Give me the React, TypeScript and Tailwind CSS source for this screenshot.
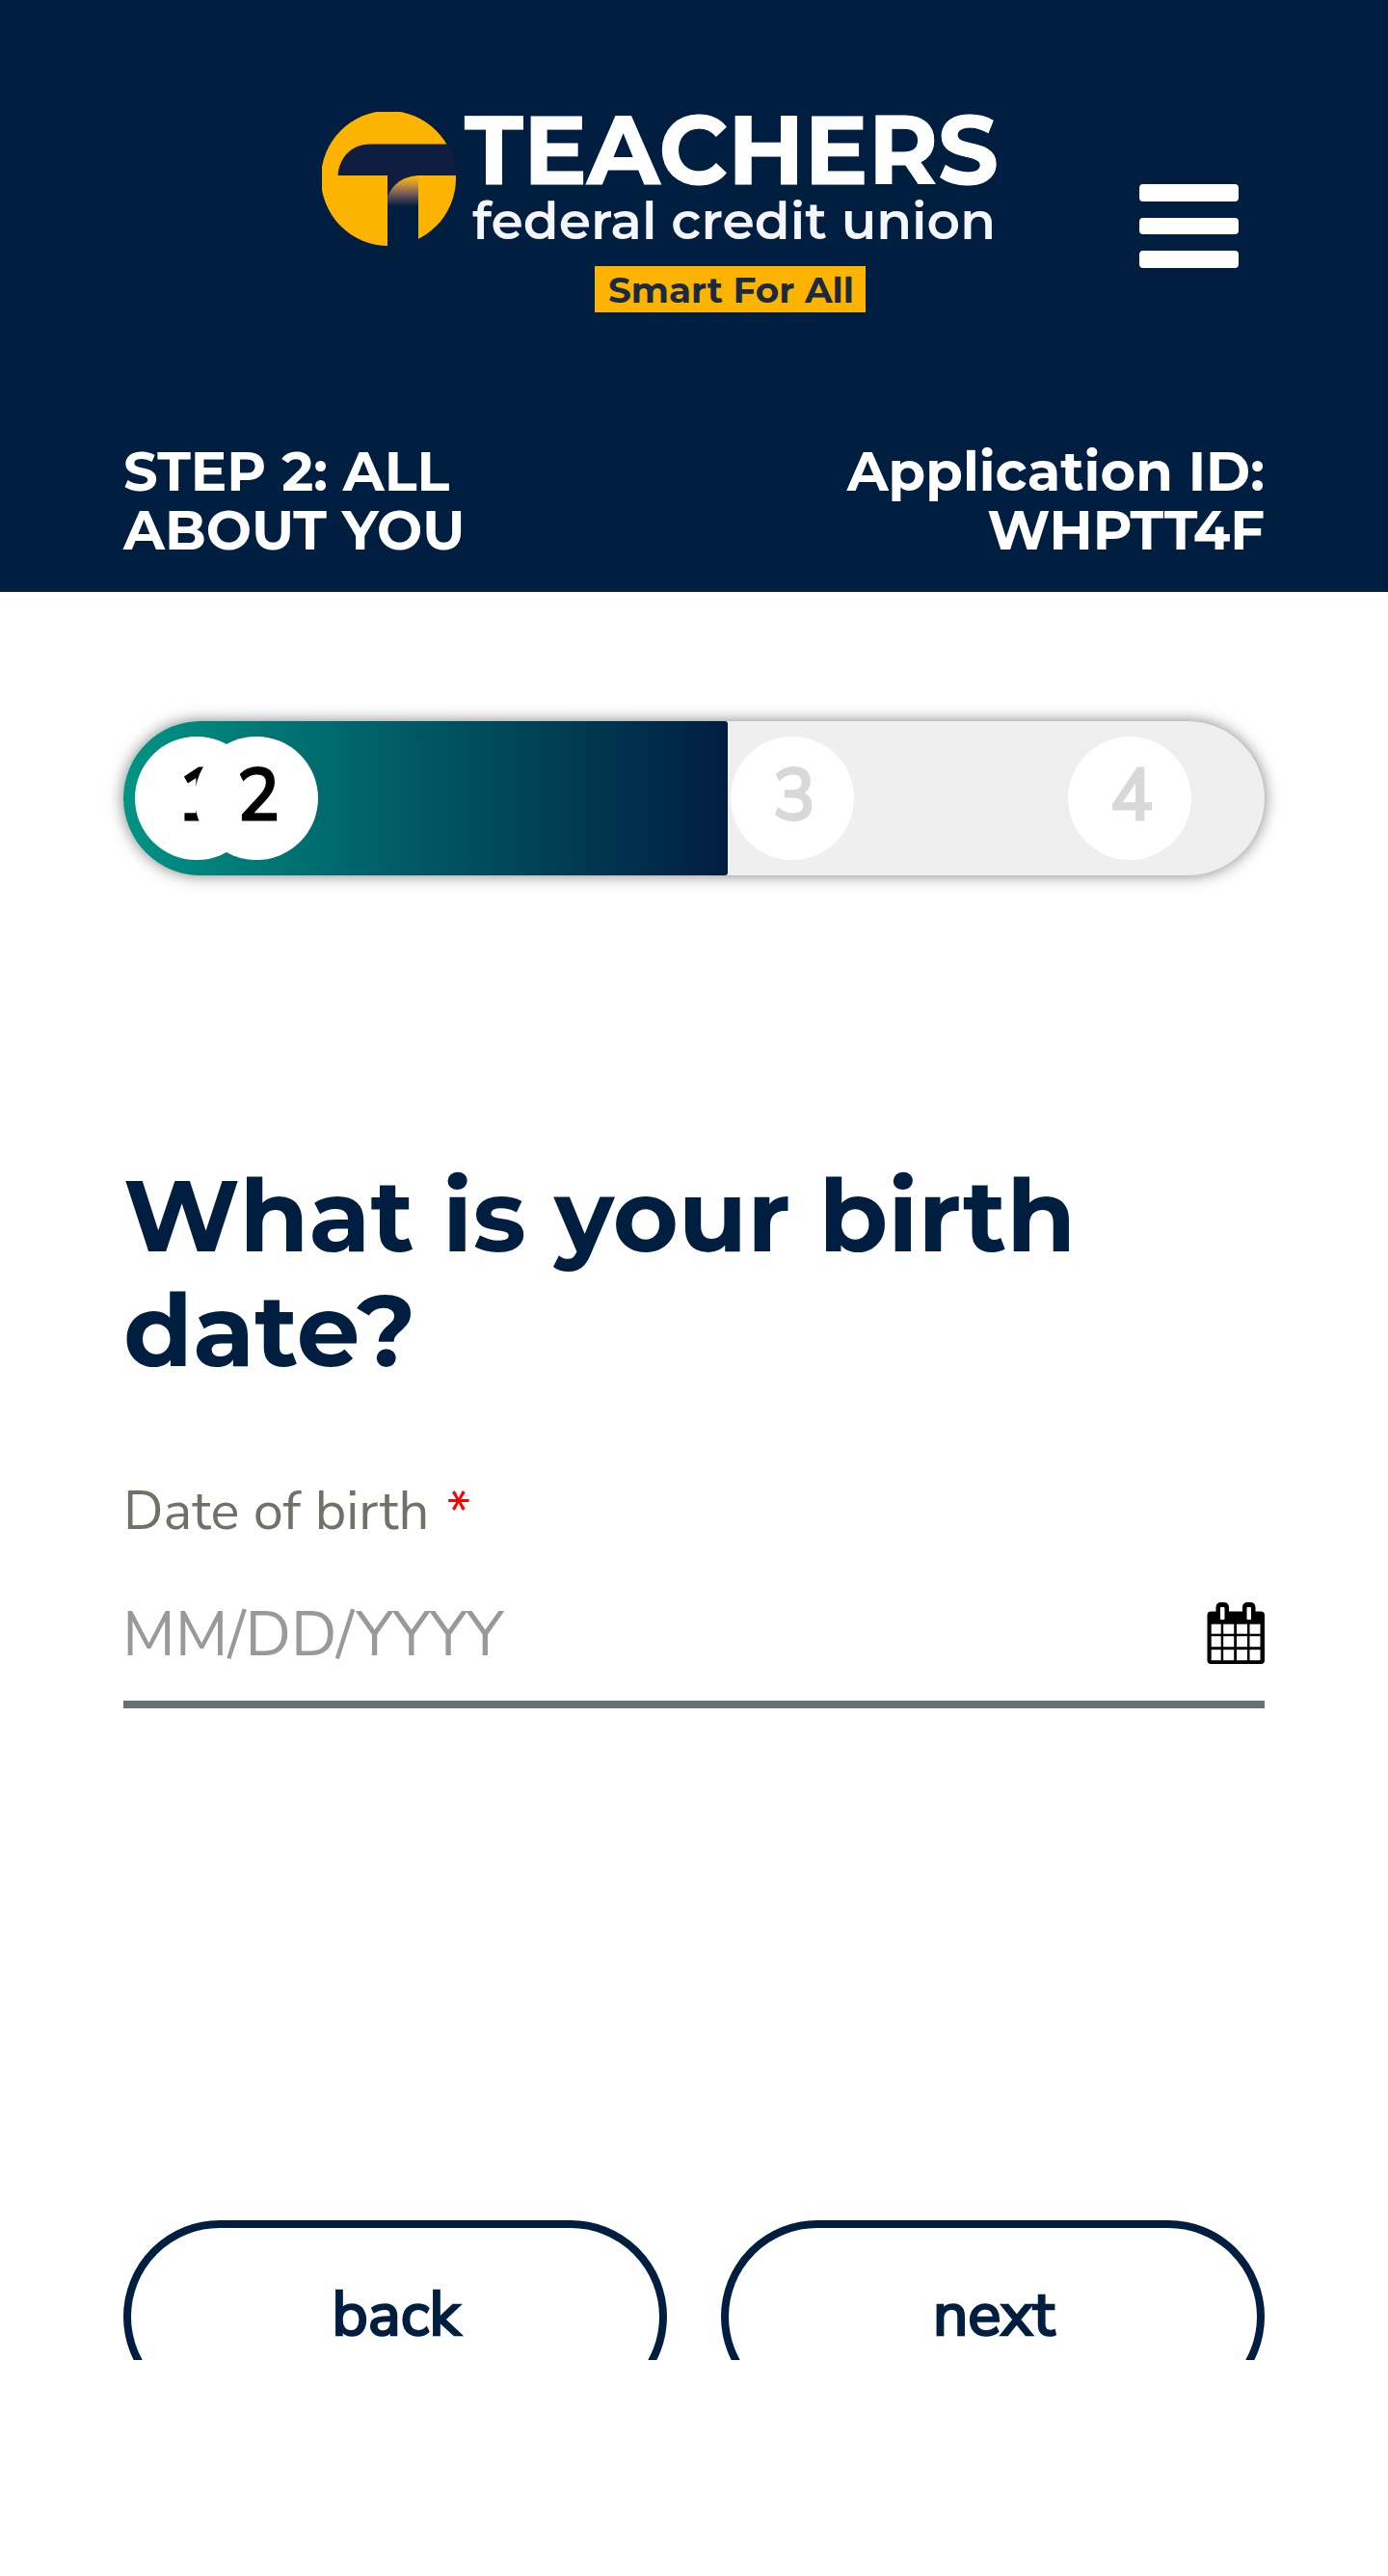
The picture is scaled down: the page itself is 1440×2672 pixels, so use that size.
function Logo() {
  return (
    <svg viewBox="334 116 700 208" className="h-[208px] w-[700px]" role="img" aria-label="Teachers federal credit union">
      <defs>
        <linearGradient id="fold" x1="0" y1="184" x2="0" y2="214" gradientUnits="userSpaceOnUse">
          <stop offset="0" stopColor="#fdb400" />
          <stop offset="0.25" stopColor="#c48f3f" />
          <stop offset="0.6" stopColor="#6b5557" />
          <stop offset="1" stopColor="#001e40" />
        </linearGradient>
        <clipPath id="disc">
          <circle cx="403" cy="185" r="71" />
        </clipPath>
      </defs>
      <circle cx="403" cy="185" r="70" fill="#fdb400" />
      <g clipPath="url(#disc)">
        <path d="M350.500 182C352 164 364 149.500 384 149.500H480V182H434V260H402V182Z" fill="#0f1d40" />
        <path d="M402 206H434V260H402Z" fill="#001e40" />
        <path d="M434 182C418 183 408 190 402 204V214H434Z" fill="url(#fold)" />
      </g>
      <g fontFamily="Montserrat, Inter, sans-serif">
        <text x="482" y="191" fontSize="101" fontWeight="700" fill="#fff" stroke="#fff" strokeWidth="1" textLength="554" lengthAdjust="spacingAndGlyphs">TEACHERS</text>
        <text x="490" y="248" fontSize="54" fontWeight="600" fill="#f4f6f9" textLength="543" lengthAdjust="spacingAndGlyphs">federal credit union</text>
        <rect x="617" y="276" width="281" height="48" fill="#fdb400" />
        <text x="631" y="314" fontSize="37" fontWeight="700" fill="#1b2a3d" textLength="255" lengthAdjust="spacingAndGlyphs">Smart For All</text>
      </g>
    </svg>
  );
}

function CalendarIcon() {
  return (
    <svg viewBox="0 0 60 64" className="h-16 w-[60px]" aria-hidden="true">
      <rect x="0.500" y="9.500" width="59.500" height="54.500" rx="4" />
      <rect x="9.500" width="13.500" height="20" rx="5" />
      <rect x="37" width="13.500" height="20" rx="5" />
      <g fill="#fff">
        <rect x="14" y="5" width="4.500" height="13" rx="1" />
        <rect x="41.500" y="5" width="4.500" height="13" rx="1" />
        {[22.7, 35.2, 49.2].map((y, r) =>
          [4.7, 17.2, 31, 44.5].map((x) => (
            <rect key={`${x}-${y}`} x={x} y={y} width={x === 4.7 ? 10 : 11} height={r === 0 ? 10 : 11} />
          )),
        )}
      </g>
    </svg>
  );
}

function Step({ n, active, className = "" }: { n: number; active?: boolean; className?: string }) {
  return (
    <span
      className={`flex size-32 shrink-0 items-center justify-center rounded-full bg-white pb-1 pl-1 text-[74px] leading-none [-webkit-text-stroke:3px] ${active ? "text-black" : "text-[#d8d8d8]"} ${className}`}
    >
      {n}
    </span>
  );
}

export default function App() {
  return (
    <div className="h-[2672px] w-[1440px] overflow-hidden bg-white font-['Nunito_Sans',Nunito,Lato,sans-serif]">
      <header className="h-[614px] bg-[#001e40] pt-[116px] font-[Montserrat,Inter,sans-serif] text-white">
        <div className="flex h-[343px] items-start pl-[334px]">
          <Logo />
          <button aria-label="Menu" className="mt-[75px] ml-[148px] flex w-[103px] flex-col gap-[17px]">
            <span className="h-[17.5px] rounded-[4px] bg-white" />
            <span className="h-[17.5px] rounded-[4px] bg-white" />
            <span className="h-[17.5px] rounded-[4px] bg-white" />
          </button>
        </div>
        <div className="flex justify-between px-32 text-[56px] leading-[61px] font-bold">
          <p>
            STEP 2: ALL
            <br />
            ABOUT YOU
          </p>
          <p className="text-right">
            Application ID:
            <br />
            WHPTT4F
          </p>
        </div>
      </header>

      <main className="px-32 pt-[134px]">
        <div className="h-40 rounded-full bg-[#efefef] shadow-[0_0_16px_rgba(0,0,0,0.5)]">
          <div className="flex h-full items-center">
            <div className="flex h-full w-[627px] items-center rounded-l-[80px] rounded-r-[3px] bg-linear-to-r from-[#009484] to-[#001e40] pl-3">
              <Step n={1} active />
              <Step n={2} active className="-ml-[66px]" />
            </div>
            <Step n={3} className="ml-[3px]" />
            <Step n={4} className="ml-[222px]" />
          </div>
        </div>

        <h1 className="mt-[293px] font-[Montserrat,Inter,sans-serif] text-[104px] leading-[119px] font-bold text-[#001e40]">
          What is your birth
          <br />
          date?
        </h1>

        <label className="mt-[96px] flex h-[66px] text-[56px] leading-[66px] text-[#70726a]">
          Date of birth
          <span className="mt-px ml-[18px] text-[#ff0000]">*</span>
        </label>
        <div className="mt-[57px] flex h-[114px] items-start justify-between border-b-8 border-[#667172] text-[64px] leading-[76px] text-[#999]">
          <span className="-ml-px">MM/DD/YYYY</span>
          <span className="mt-[4px]">
            <CalendarIcon />
          </span>
        </div>

        <div className="mt-[531px] flex h-[145px] justify-between overflow-hidden text-[64px] leading-none text-[#001e40] [-webkit-text-stroke:2.6px]">
          <button className="flex h-[200px] w-[564px] items-center justify-center rounded-full border-8 border-[#001e40] pb-1 pl-0.5">
            back
          </button>
          <button className="flex h-[200px] w-[564px] items-center justify-center rounded-full border-8 border-[#001e40] pb-1 pl-0.5">
            next
          </button>
        </div>
      </main>
    </div>
  );
}
